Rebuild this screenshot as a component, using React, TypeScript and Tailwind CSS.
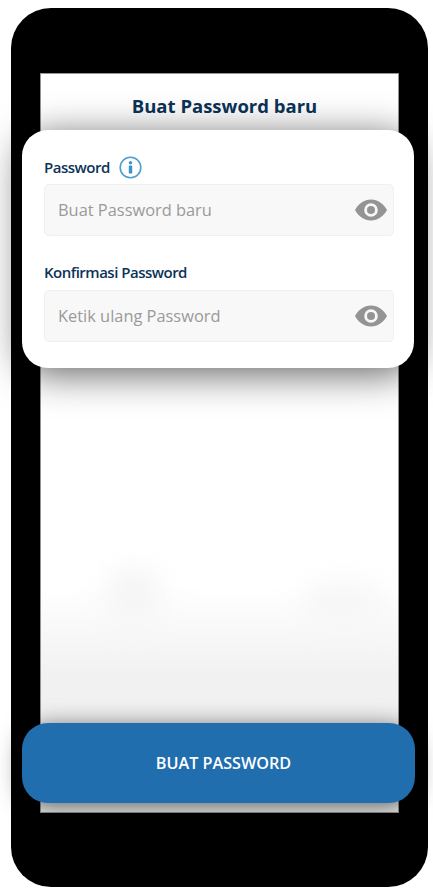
import React from "react";

function EyeIcon() {
  return (
    <svg width="32" height="22" viewBox="0 0 32 22" className="shrink-0">
      <path
        fillRule="evenodd"
        fill="#949494"
        d="M16 0.500C9 0.500 3.400 5 0 11 3.400 17 9 21.500 16 21.500S28.600 17 32 11C28.600 5 23 0.500 16 0.500zm0 3.700a6.800 6.800 0 1 1 0 13.600 6.800 6.800 0 0 1 0-13.600z"
      />
      <circle cx="16" cy="11" r="4" fill="#949494" />
    </svg>
  );
}

function InfoIcon() {
  return (
    <svg width="23" height="23" viewBox="0 0 23 23">
      <circle cx="11.500" cy="11.500" r="10.300" fill="none" stroke="#4a9fd0" strokeWidth="1.600" />
      <circle cx="11.500" cy="6.800" r="1.700" fill="#3b93cc" />
      <rect x="9.800" y="9.600" width="3.400" height="8" rx="0.500" fill="#3b93cc" />
    </svg>
  );
}

function PasswordField({ placeholder }: { placeholder: string }) {
  return (
    <div className="flex h-[52px] items-center justify-between rounded-[5px] border border-[#f0f0f0] bg-[#f8f8f8] pl-[13px] pr-[6px]">
      <span className="text-[16.400px] text-[#9a9a9a]">{placeholder}</span>
      <EyeIcon />
    </div>
  );
}

export default function App() {
  return (
    <div
      className="h-[893px] w-[433px] overflow-hidden bg-white pl-[11px] pt-[8px]"
      style={{ fontFamily: '"Open Sans", sans-serif' }}
    >
      {/* Phone frame */}
      <div className="h-[879px] w-[417px] rounded-[40px] bg-black pl-[29px] pt-[65px]">
        {/* Screen */}
        <div className="relative flex h-[740px] w-[359px] flex-col bg-white shadow-[inset_0_0_0_1px_#8f979c]">
          {/* blurred shapes behind the button */}
          <div className="absolute inset-px overflow-hidden">
            <div className="absolute inset-x-0 bottom-0 h-[225px] bg-gradient-to-b from-white to-[#f1f1f1] to-[40%]" />
            <div className="absolute left-[65px] top-[495px] h-[50px] w-[55px] rounded-full bg-[#f4f4f4] blur-[14px]" />
            <div className="absolute left-[265px] top-[510px] h-[35px] w-[75px] rounded-full bg-[#f5f5f5] blur-[14px]" />
          </div>

          <h1 className="relative h-[57px] pl-[10px] pt-[17px] text-center text-[18.500px] font-bold leading-[32px] text-[#0b3358]">
            Buat Password baru
          </h1>

          {/* Form card */}
          <div className="relative -ml-[18px] h-[238px] w-[392px] rounded-[26px] bg-white pl-[22px] pr-[20px] pt-[22px] shadow-[0_6px_38px_rgba(0,0,0,0.62)]">
            <div className="flex h-[32px] items-center gap-[9px] pb-[2px]">
              <span className="text-[15px] font-semibold tracking-[-0.500px] text-[#0b3358]">Password</span>
              <InfoIcon />
            </div>
            <PasswordField placeholder="Buat Password baru" />
            <div className="mt-[21px] flex h-[33px] items-center pb-[2px]">
              <span className="text-[15px] font-semibold tracking-[-0.500px] text-[#0b3358]">Konfirmasi Password</span>
            </div>
            <PasswordField placeholder="Ketik ulang Password" />
          </div>

          {/* Submit button */}
          <div className="relative -ml-[18px] mb-[10px] mt-auto flex h-[80px] w-[393px] items-center justify-center rounded-[26px] bg-[#206eae] pl-[10px] shadow-[0_4px_24px_rgba(0,0,0,0.62)]">
            <span className="text-[16.200px] font-semibold text-white">BUAT PASSWORD</span>
          </div>
        </div>
      </div>
    </div>
  );
}
